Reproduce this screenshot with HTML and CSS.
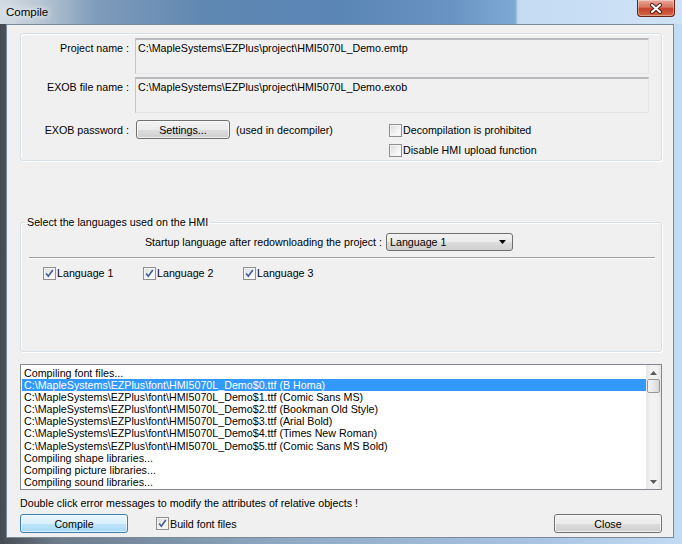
FILE: index.html
```html
<!DOCTYPE html>
<html lang="en">
<head>
  <meta charset="UTF-8" />
  <title>Compile</title>
  <link rel="stylesheet" href="styles.css">
</head>
<body>
  <div class="window">
    <div class="titlebar">
      <span class="title">Compile</span>
      <span class="close-btn">
        <svg width="14" height="11" viewBox="0 0 14 11">
          <path d="M3 2 L11 9 M11 2 L3 9" stroke="#4a1a12" stroke-width="4" stroke-linecap="round"/>
          <path d="M3 2 L11 9 M11 2 L3 9" stroke="#fff" stroke-width="2.2" stroke-linecap="round"/>
        </svg>
      </span>
    </div>

    <div class="client">
      <div class="group info">
        <div class="field-row">
          <span class="field-label">Project name :</span>
          <div class="readonly">C:\MapleSystems\EZPlus\project\HMI5070L_Demo.emtp</div>
        </div>
        <div class="field-row">
          <span class="field-label">EXOB file name :</span>
          <div class="readonly">C:\MapleSystems\EZPlus\project\HMI5070L_Demo.exob</div>
        </div>
        <div class="pw-row">
          <div class="pw-left">
            <span class="field-label">EXOB password :</span>
            <button class="btn settings-btn">Settings...</button>
            <span class="note">(used in decompiler)</span>
          </div>
          <div class="pw-checks">
            <label class="check"><span class="box"></span>Decompilation is prohibited</label>
            <label class="check"><span class="box"></span>Disable HMI upload function</label>
          </div>
        </div>
      </div>

      <fieldset class="group langs">
        <legend>Select the languages used on the HMI</legend>
        <div class="startup-row">
          <span>Startup language after redownloading the project :</span>
          <div class="combo">
            <span>Language 1</span>
            <svg class="combo-arrow" width="7" height="4" viewBox="0 0 7 4"><path d="M0 0 H7 L3.5 4 Z" fill="#000"/></svg>
          </div>
        </div>
        <div class="etched"></div>
        <div class="lang-checks">
          <label class="check"><span class="box checked"><svg width="11" height="11" viewBox="0 0 11 11"><path d="M2.2 5.6 L4.3 8.2 L8.8 2" fill="none" stroke="#3d5a9c" stroke-width="1.6"/></svg></span>Language 1</label>
          <label class="check"><span class="box checked"><svg width="11" height="11" viewBox="0 0 11 11"><path d="M2.2 5.6 L4.3 8.2 L8.8 2" fill="none" stroke="#3d5a9c" stroke-width="1.6"/></svg></span>Language 2</label>
          <label class="check"><span class="box checked"><svg width="11" height="11" viewBox="0 0 11 11"><path d="M2.2 5.6 L4.3 8.2 L8.8 2" fill="none" stroke="#3d5a9c" stroke-width="1.6"/></svg></span>Language 3</label>
        </div>
      </fieldset>

      <div class="listbox">
        <div class="items">
          <div class="item">Compiling font files...</div>
          <div class="item selected">C:\MapleSystems\EZPlus\font\HMI5070L_Demo$0.ttf (B Homa)</div>
          <div class="item">C:\MapleSystems\EZPlus\font\HMI5070L_Demo$1.ttf (Comic Sans MS)</div>
          <div class="item">C:\MapleSystems\EZPlus\font\HMI5070L_Demo$2.ttf (Bookman Old Style)</div>
          <div class="item">C:\MapleSystems\EZPlus\font\HMI5070L_Demo$3.ttf (Arial Bold)</div>
          <div class="item">C:\MapleSystems\EZPlus\font\HMI5070L_Demo$4.ttf (Times New Roman)</div>
          <div class="item">C:\MapleSystems\EZPlus\font\HMI5070L_Demo$5.ttf (Comic Sans MS Bold)</div>
          <div class="item">Compiling shape libraries...</div>
          <div class="item">Compiling picture libraries...</div>
          <div class="item">Compiling sound libraries...</div>
        </div>
        <div class="scrollbar">
          <svg width="7" height="4" viewBox="0 0 7 4"><path d="M0 4 H7 L3.5 0 Z" fill="#5a5a5a"/></svg>
          <div class="thumb"></div>
          <div class="track"></div>
          <svg width="7" height="4" viewBox="0 0 7 4"><path d="M0 0 H7 L3.5 4 Z" fill="#5a5a5a"/></svg>
        </div>
      </div>

      <p class="hint">Double click error messages to modify the attributes of relative objects !</p>

      <div class="actions">
        <button class="btn default-btn">Compile</button>
        <label class="check build"><span class="box checked"><svg width="11" height="11" viewBox="0 0 11 11"><path d="M2.2 5.6 L4.3 8.2 L8.8 2" fill="none" stroke="#3d5a9c" stroke-width="1.6"/></svg></span>Build font files</label>
        <button class="btn close">Close</button>
      </div>
    </div>
  </div>
</body>
</html>
```

FILE: styles.css
```css
html, body {
  margin: 0;
  padding: 0;
  width: 682px;
  height: 544px;
  overflow: hidden;
}

body {
  font-family: 'Liberation Sans', Arial, sans-serif;
  font-size: 10.7px;
  color: #000;
}

.window {
  width: 682px;
  height: 544px;
  display: flex;
  flex-direction: column;
  background: linear-gradient(to right,
    #454b52 0%,
    #6c7a88 8%,
    #8ea8c2 40%,
    #a9c5e2 80%,
    #c3dbf3 100%);
}

.titlebar {
  height: 24px;
  flex: none;
  display: flex;
  align-items: flex-start;
  justify-content: space-between;
  background: linear-gradient(to right,
    #d3dce4 0%,
    #b8c6d3 6%,
    #7f9cba 14%,
    #5f87b2 30%,
    #5a86b6 50%,
    #6893c2 66%,
    #7ea8d4 75.5%,
    #c4dbf2 76%,
    #cfe3f7 100%);
}

.title {
  margin: 6px 0 0 6px;
  font-size: 11.5px;
  text-shadow: 0 0 6px #fff, 0 0 10px #fff;
}

.close-btn {
  width: 38px;
  height: 17px;
  margin-right: 7px;
  display: flex;
  align-items: center;
  justify-content: center;
  box-sizing: border-box;
  border: 1px solid #6d2116;
  border-top: none;
  border-radius: 0 0 4px 4px;
  background: linear-gradient(to bottom, #e9a99b 0%, #d9715f 45%, #c4412b 55%, #cf6a48 100%);
  box-shadow: inset 0 0 0 1px rgba(255, 255, 255, 0.35);
}

.client {
  flex: 1;
  margin: 0 8px 6px 6px;
  border: 1px solid #7b8a99;
  background: #f0f0f0;
  padding: 8px 11px 0 13px;
  display: flex;
  flex-direction: column;
}

.group {
  border: 1px solid #d5dfe5;
  border-radius: 3px;
  box-shadow: inset 1px 1px 0 #fff, 1px 1px 0 #fff;
}

.info {
  height: 128px;
  box-sizing: border-box;
  padding: 4px 12px 0 0;
}

.field-row {
  display: flex;
  align-items: flex-start;
  gap: 6px;
  margin-bottom: 3px;
}

.field-label {
  width: 108px;
  flex: none;
  text-align: right;
  padding-top: 3px;
  line-height: 14px;
}

.readonly {
  flex: 1;
  height: 36px;
  box-sizing: border-box;
  padding: 1px 2px;
  line-height: 14px;
  border-top: 2px solid #b7b9bc;
  border-left: 1px solid #c2c4c7;
  border-right: 1px solid #e6e6e6;
  border-bottom: 1px solid #e6e6e6;
  background: #f0f0f0;
}

.pw-row {
  display: flex;
  margin-top: 7px;
}

.pw-left {
  width: 368px;
  flex: none;
  display: flex;
  align-items: center;
  gap: 6px;
  height: 19px;
}

.pw-left .field-label {
  padding-top: 0;
}

.pw-checks {
  display: flex;
  flex-direction: column;
  gap: 6px;
  padding-top: 3px;
}

.btn {
  font-family: 'Liberation Sans', Arial, sans-serif;
  font-size: 10.7px;
  color: #000;
  height: 19px;
  padding: 0;
  border: 1px solid #707070;
  border-radius: 3px;
  background: linear-gradient(to bottom, #f2f2f2 0%, #ebebeb 50%, #dddddd 51%, #cfcfcf 100%);
  box-shadow: inset 0 0 0 1px rgba(255, 255, 255, 0.7);
}

.settings-btn {
  width: 94px;
  margin-left: 1px;
}

.check {
  display: flex;
  align-items: center;
  gap: 1px;
  line-height: 14px;
}

.box {
  width: 13px;
  height: 13px;
  flex: none;
  box-sizing: border-box;
  border: 1px solid #8f8f8f;
  background: linear-gradient(135deg, #d8d8d8 0%, #f4f4f4 60%, #ffffff 100%);
  box-shadow: inset 0 0 0 1px #f4f4f4;
  display: flex;
  align-items: center;
  justify-content: center;
}

.langs {
  margin: 54px 0 0 0;
  padding: 0;
  height: 137px;
  box-sizing: border-box;
  min-width: 0;
}

.langs legend {
  margin-left: 4px;
  padding: 0 2px;
  line-height: 14px;
}

.startup-row {
  display: flex;
  justify-content: flex-end;
  align-items: center;
  gap: 4px;
  margin-top: 4px;
  padding-right: 148px;
}

.combo {
  width: 127px;
  height: 18px;
  box-sizing: border-box;
  border: 1px solid #707070;
  border-radius: 3px;
  background: linear-gradient(to bottom, #f2f2f2 0%, #ebebeb 50%, #dddddd 51%, #cfcfcf 100%);
  display: flex;
  align-items: center;
  justify-content: space-between;
  padding: 0 6px 0 3px;
}

.etched {
  margin: 6px 6px 0 8px;
  border-top: 1px solid #a0a0a0;
  border-bottom: 1px solid #fff;
}

.lang-checks {
  display: flex;
  padding-left: 22px;
  margin-top: 7px;
}

.lang-checks .check {
  width: 100px;
}

.listbox {
  margin-top: 12px;
  height: 126px;
  box-sizing: border-box;
  border: 1px solid #828790;
  background: #fff;
  display: flex;
}

.items {
  flex: 1;
  overflow: hidden;
  padding: 2px 0 0 1px;
}

.item {
  height: 12.1px;
  line-height: 12px;
  padding-left: 2px;
  white-space: nowrap;
}

.item.selected {
  background: #3399ff;
  color: #fff;
}

.scrollbar {
  width: 15px;
  flex: none;
  background: linear-gradient(to right, #e6e6e6, #f2f2f2 30%, #f2f2f2 70%, #e6e6e6);
  display: flex;
  flex-direction: column;
  align-items: center;
  padding: 6px 0 5px;
  box-sizing: border-box;
}

.thumb {
  width: 13px;
  height: 14px;
  margin-top: 4px;
  box-sizing: border-box;
  border: 1px solid #979797;
  border-radius: 2px;
  background: linear-gradient(to right, #f3f3f3, #e8e8e8 50%, #d6d6d6);
}

.track {
  flex: 1;
}

.hint {
  margin: 6px 0 0 0;
  line-height: 14px;
}

.actions {
  display: flex;
  align-items: center;
  margin-top: 4px;
}

.default-btn {
  width: 108px;
  border-color: #3c7fb1;
  background: linear-gradient(to bottom, #eaf6fd 0%, #d9f0fc 50%, #bee6fd 51%, #a7d9f5 100%);
  box-shadow: inset 0 0 0 1px rgba(255, 255, 255, 0.6);
}

.build {
  margin-left: 28px;
}

.close {
  width: 108px;
  margin-left: auto;
}
```
